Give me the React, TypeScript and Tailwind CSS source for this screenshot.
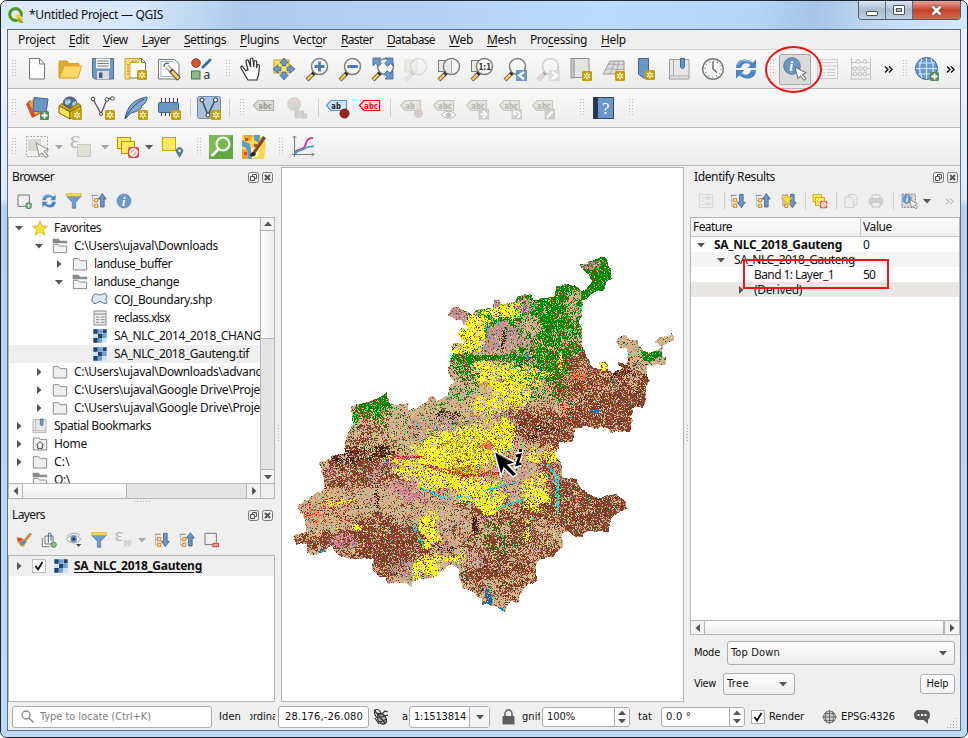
import React, { useLayoutEffect, useRef } from "react";

/* ---------- text ---------- */

type FitProps = { w?: number; className?: string; children: React.ReactNode };

/* Spreads its letters so that the label takes exactly w pixels. */
function Fit({ w, className = "", children }: FitProps) {
  const ref = useRef<HTMLSpanElement>(null);
  useLayoutEffect(() => {
    const el = ref.current;
    if (!el || !w) return;
    el.style.letterSpacing = "0px";
    const n = (el.textContent || "").length;
    const natural = el.getBoundingClientRect().width;
    el.style.letterSpacing = `${(w - natural) / n}px`;
  }, [w]);
  return (
    <span ref={ref} className={`inline-block shrink-0 whitespace-pre ${className}`}>
      {children}
    </span>
  );
}

const UI = "font-['Noto_Sans','Open_Sans',sans-serif] text-[12px] leading-[18px]";
const TAHOMA = "font-['DejaVu_Sans',sans-serif] [font-stretch:semi-condensed] text-[11px] leading-[16px]";

/* ---------- icon parts ---------- */

const BLUE = "#6a97c5";
const DBLUE = "#41668f";

function Star({ x = 15, y = 15 }: { x?: number; y?: number }) {
  return (
    <g transform={`translate(${x} ${y})`}>
      <rect width="10" height="10" rx="1.5" fill="#c4a000" />
      <path d="M5 1.5v7M1.9 3.2l6.2 3.6M8.1 3.2L1.9 6.8" stroke="#fff" strokeWidth="1.3" />
      <circle cx="5" cy="5" r="1" fill="#c4a000" />
    </g>
  );
}

function Plus({ x = 15, y = 15 }: { x?: number; y?: number }) {
  return (
    <g transform={`translate(${x} ${y})`}>
      <rect width="9" height="9" rx="1.5" fill="#5a8c5a" />
      <path d="M4.5 1.5v6M1.5 4.5h6" stroke="#fff" strokeWidth="1.8" />
    </g>
  );
}

function Lens({ gray = false }: { gray?: boolean }) {
  return (
    <g opacity={gray ? 0.35 : 1}>
      <path d="M10 15L2 23" stroke={gray ? "#888" : "#555"} strokeWidth="4" />
      <path d="M7.6 17.4L2.4 22.6" stroke={gray ? "#bbb" : "#fcc94a"} strokeWidth="2.4" />
      <path d="M9.8 15.2L7.6 17.4" stroke="#222" strokeWidth="3.4" />
      <circle cx="14.5" cy="9.5" r="8" fill="#f4f6f4" stroke="#7d7d7d" strokeWidth="1.5" />
      <path d="M9 9a6 6 0 0 1 8-5" stroke="#fff" strokeWidth="1.4" fill="none" />
    </g>
  );
}

function Abc({ color = "#b5b5ab", fill = "#deded4", text = "abc", tc = "#9c9c94" }) {
  return (
    <g>
      <path d="M1.500 9.500L6 4.500H21.500v10H6z" fill={fill} stroke={color} strokeWidth="1.2" />
      <text x="6.300" y="12.600" fontSize="8.500" fontWeight="700" fill={tc} fontFamily="'DejaVu Sans',sans-serif" textLength={text === "abc" ? 13.5 : 9.5} lengthAdjust="spacingAndGlyphs">
        {text}
      </text>
    </g>
  );
}

function Refresh() {
  return (
    <g fill="#4a86c7">
      <path d="M2 11C2 4 8 1 14 3c2 .6 3.500 1.600 4.500 2.800L22 2.500V11h-8.500l3-3C13 5 8 6 7 11z" />
      <path d="M22 13c0 7-6 10-12 8-2-.6-3.500-1.600-4.500-2.800L2 21.500V13h8.500l-3 3c3.500 3 8.500 2 9.500-3z" />
      <path d="M4 8c2-5 8-6 13-2" stroke="#a9cdf0" fill="none" />
    </g>
  );
}

function Arrow({ x, y, s = 1 }: { x: number; y: number; s?: number }) {
  return (
    <path
      transform={`translate(${x} ${y}) scale(${s})`}
      d="M0 0l3 12 2.800-2.600 3.700 4.600 2-1.600-3.600-4.600L11.500 6z"
      fill="#fff"
      stroke="#777"
      strokeWidth="1.1"
    />
  );
}

function Notallowed({ x, y }: { x: number; y: number }) {
  return (
    <g transform={`translate(${x} ${y})`}>
      <rect width="11" height="11" rx="2" fill="#df4a4a" />
      <circle cx="5.500" cy="5.500" r="3.700" fill="#f3b0b0" stroke="#fff" strokeWidth="1.400" />
      <path d="M3 8l5-5" stroke="#fff" strokeWidth="1.500" />
    </g>
  );
}

function Gem({ d }: { d: "up" | "down" }) {
  return (
    <g>
      <path d="M2.500 3v17M2.500 11h3M2.500 19.500h3" stroke="#aaa" fill="none" strokeWidth="1.300" />
      <path d="M1 3.500h9" stroke="#999" strokeWidth="2" />
      <rect x="5.500" y="8.500" width="4.500" height="4.500" fill="#fff" stroke="#f08a24" strokeWidth="1.800" />
      <rect x="5.500" y="17" width="4.500" height="4.500" fill="#fff" stroke="#f08a24" strokeWidth="1.800" />
      {d === "up" ? (
        <path d="M17 1l6 8h-3.300v12h-5.400V9H11z" fill={BLUE} stroke={DBLUE} strokeWidth="1.300" />
      ) : (
        <path d="M17 22l6-8h-3.300V2h-5.400v12H11z" fill={BLUE} stroke={DBLUE} strokeWidth="1.300" />
      )}
    </g>
  );
}

const icons: Record<string, React.ReactNode> = {
  new: <path d="M4.500 1.500h10l5 5.500v15h-15zM14.500 1.500V7h5" fill="#fdfdfd" stroke="#777" />,
  open: (
    <g>
      <path d="M1 21V4h8l2 2.500h10V9l-3 12z" fill="#e3a72f" stroke="#d89c28" />
      <path d="M1.500 21L6 9h17.500L20 21z" fill="#ffd763" stroke="#dfa732" />
    </g>
  ),
  save: (
    <g>
      <path d="M1.500 1.500h21v20.500H3.500l-2-2z" fill="#7296bd" stroke="#4e6f94" />
      <rect x="5" y="1.500" width="14" height="10" fill="#f4f4f4" />
      <path d="M6.500 4h11M6.500 6.500h11M6.500 9h11" stroke="#777" />
      <rect x="6" y="14" width="12" height="8" fill="#ddd" />
      <rect x="8" y="15.500" width="3.500" height="5.500" fill="#3f5f86" />
    </g>
  ),
  layout: (
    <g>
      <path d="M3.500 1.500h14l4 4v15.500h-18z" fill="#fcfcfc" stroke="#777" />
      <path d="M17.500 1.500v4h4" fill="none" stroke="#777" />
      <path d="M1 1.500h14v4H6V22H1z" fill="#fce083" stroke="#c9a227" />
      <path d="M3 8h2M3 11h2M3 14h2M3 17h2M9 3v2M12 3v2" stroke="#a07d10" />
      <Star x={13} y={13} />
    </g>
  ),
  manager: (
    <g>
      <path d="M1.500 2.500h16l4.500 4v15.500H1.500z" fill="#fcfcfc" stroke="#777" />
      <path d="M4 4.500h12M4 19.500h14M4 4.500v15" stroke="#9fb3cc" />
      <path d="M13.500 13l8.500 9" stroke="#555" strokeWidth="5" />
      <path d="M15 14.500l6.500 7" stroke="#f0d05a" strokeWidth="3" />
      <path d="M13.500 13L10 9.500" stroke="#777" strokeWidth="4.500" />
      <path d="M13.500 13L9 8.500" stroke="#e8e8e8" strokeWidth="3" />
      <path d="M7 10c0-3.500 2-4.500 5-3.500" stroke="#666" strokeWidth="1.500" fill="none" />
    </g>
  ),
  style: (
    <g>
      <circle cx="6" cy="6" r="4.300" fill="#d4572f" stroke="#a33f1d" />
      <path d="M13 10l7-7" stroke="#3d6da8" strokeWidth="3" strokeLinecap="round" />
      <rect x="1.500" y="14" width="8.500" height="8" fill="#8dbb8c" stroke="#4b7a4b" />
      <text x="13.500" y="21.500" fontSize="12" fill="#333" fontFamily="'Noto Sans',sans-serif">a</text>
    </g>
  ),
  hand: (
    <path
      d="M6.500 13.500L4 10c-1-1.500-2.800-.5-2 1l4.500 8 2.500 4h9l1.500-5 1-9c0-2-2.500-2-2.500 0l-.5 2 .2-6c0-2-2.700-2-2.700 0l-.2 5L14 2.500c-.4-2-3-1.500-2.800.5l.5 7-2.200-6c-.8-1.800-3-1-2.500 1l2 8z"
      fill="#fff"
      stroke="#333"
      strokeWidth="1.200"
    />
  ),
  pan: (
    <g>
      <rect x="2" y="3" width="15" height="13" fill="#ffe65c" stroke="#b89c1c" />
      <g fill={BLUE} stroke={DBLUE} strokeWidth=".800">
        <path d="M12 1l4.300 5h-2.500V9h-3.600V6H7.700zM12 23l4.300-5h-2.500V15h-3.600v3H7.700z" />
        <path d="M1 12l5-4.300v2.500H9v3.600H6v2.500zM23 12l-5-4.300v2.500H15v3.600h3v2.500z" />
      </g>
    </g>
  ),
  zin: (
    <g>
      <Lens />
      <path d="M14.500 4.500v10M9.500 9.500h10" stroke="#4f7cad" strokeWidth="2.800" />
    </g>
  ),
  zout: (
    <g>
      <Lens />
      <path d="M9.300 9.500h10.500" stroke="#4f7cad" strokeWidth="2.800" />
    </g>
  ),
  zfull: (
    <g>
      <Lens />
      <g fill={BLUE} stroke={DBLUE} strokeWidth=".800">
        <path d="M2 1h8L7.600 3.200l3 3-3 3-3-3L2 9z" />
        <path d="M22 1v8l-2.300-2.600-3 3-3-3 3-3L14 1z" />
        <path d="M22 22h-8l2.300-2.300-3-3 3-3 3 3L22 14z" />
      </g>
    </g>
  ),
  zsel: (
    <g opacity=".550">
      <rect x="1" y="3" width="12" height="12" fill="#e4e3d6" stroke="#c8c8c0" />
      <Lens gray />
    </g>
  ),
  zlayer: (
    <g>
      <rect x="1.500" y="3.500" width="12" height="11" fill="#e9e9e4" stroke="#777" />
      <Lens />
      <path d="M14.500 3v13H9V6z" fill="#dcddd8" opacity=".600" />
      <path d="M14.500 3v13" stroke="#aaa" />
    </g>
  ),
  znative: (
    <g>
      <rect x="1.500" y="3.500" width="12" height="11" fill="#e9e9e4" stroke="#777" />
      <Lens />
      <text x="8.500" y="13" fontSize="9.500" fontWeight="700" fill="#333" fontFamily="'DejaVu Sans',sans-serif" textLength="12.500" lengthAdjust="spacingAndGlyphs">1:1</text>
    </g>
  ),
  zlast: (
    <g>
      <Lens />
      <rect x="13" y="13" width="11" height="11" fill={BLUE} />
      <path d="M21 15l-5 3.500 5 3.500" stroke="#fff" strokeWidth="2.200" fill="none" />
    </g>
  ),
  znext: (
    <g>
      <Lens gray />
      <rect x="13" y="13" width="11" height="11" fill="#dcdcdc" />
      <path d="M16 15l5 3.500-5 3.500" stroke="#fff" strokeWidth="2.200" fill="none" />
    </g>
  ),
  newmap: (
    <g>
      <path d="M2 1.500h18v19H4.500V4z" fill="#e4e4e4" stroke="#8f8f8f" />
      <path d="M2 1.500h3v19.500H2z" fill="#ccc" stroke="#8f8f8f" />
      <Star x={13} y={14} />
    </g>
  ),
  new3d: (
    <g>
      <path d="M8 4h14v11L14 17H1z" fill="#ddd" stroke="#999" />
      <path d="M6 8c5-3 9 2 16-1M3 13c5-3 10 1 19-1M13 4L8 17M17 4l-3 13" stroke="#aaa" fill="none" />
      <Star x={13} y={14} />
    </g>
  ),
  newbook: (
    <g>
      <path d="M3.500 1.500h10V17L9 21.500 3.500 17z" fill={BLUE} stroke={DBLUE} />
      <Star x={10} y={13} />
    </g>
  ),
  books: (
    <g>
      <path d="M1.500 2.500h19.500v19.500H1.500z" fill="#e8e8e8" stroke="#999" />
      <path d="M5.500 2v17M1.500 19h19.500" stroke="#aaa" />
      <path d="M12.500 1.500h4V10l-2 2-2-2z" fill={BLUE} stroke={DBLUE} />
    </g>
  ),
  clock: (
    <g>
      <circle cx="12" cy="12" r="10.300" fill="#f6f6f4" stroke="#777" strokeWidth="1.400" />
      <circle cx="12" cy="12" r="8" fill="none" stroke="#5c86b5" strokeWidth="1.500" strokeDasharray=".8 3.400" />
      <path d="M12 4.500V12l4 3.500" stroke="#555" strokeWidth="1.300" fill="none" />
    </g>
  ),
  refresh: <Refresh />,
  identify: (
    <g>
      <circle cx="9" cy="9" r="8.300" fill={BLUE} stroke="#5580ad" />
      <text x="6.200" y="14" fontSize="14" fontStyle="italic" fontWeight="700" fill="#fff" fontFamily="'Liberation Serif',serif">i</text>
      <Arrow x={12} y={10} s={0.95} />
    </g>
  ),
  table: (
    <g opacity=".350">
      <rect x="1.500" y="2.500" width="20" height="19" fill="#f4f4f4" stroke="#888" />
      <path d="M2 5.500h19M2 9h19M5 12.500h4M5 15.500h4M5 18.500h4M11 12.500h8M11 15.500h8M11 18.500h8" stroke="#888" />
    </g>
  ),
  abacus: (
    <g opacity=".380" stroke="#777" fill="none">
      <path d="M2.500 1v20M21.500 1v20M2 5.500h20M2 11.500h20M2 17.500h20M1 22h22" />
      {[9, 16].map((x) => <circle key={x} cx={x} cy="4.500" r="2" fill="#ddd" />)}
      {[6, 11, 16].map((x) => <circle key={x} cx={x} cy="11.500" r="2" fill="#ddd" />)}
      {[6, 11, 16].map((x) => <circle key={x} cx={x} cy="17" r="2" fill="#ddd" />)}
    </g>
  ),
  globe: (
    <g>
      <circle cx="11.500" cy="11.500" r="11" fill="#6598cf" stroke="#41668f" />
      <path d="M11.500 1v21M1 11.500h21M3 6h17M3 17h17M7 2c-3 6-3 13 0 19M16 2c3 6 3 13 0 19" stroke="#d6e6f5" fill="none" strokeWidth="1.200" />
      <Plus x={15} y={15} />
    </g>
  ),
  dsm: (
    <g>
      <path d="M1 8l4-4 10 14-8 4z" fill="#c9532c" />
      <path d="M4 7l4-4 10 12-8 4z" fill="#f0a830" />
      <path d="M9 1.500l14 1.500-2 14-13-2z" fill={BLUE} stroke={DBLUE} />
      <Plus x={15} y={15} />
    </g>
  ),
  gpkg: (
    <g>
      <path d="M1 10l11 5v8L1 17z" fill="#ffe14e" stroke="#7a6510" />
      <path d="M12 15l11-5v7l-11 6z" fill="#e8bf14" stroke="#7a6510" />
      <circle cx="12" cy="8" r="7" fill="#4f6f92" stroke="#36506e" />
      <path d="M7 4l5-1 1 3-3 3-3-1zM14 7l4-2 1 4-4 3z" fill="#a9c6e0" />
      <path d="M1 10l2.500-2.500L12 13l8.500-6L23 10l-11 5.500z" fill="#c9a516" stroke="#7a6510" strokeWidth=".800" />
      <Star x={14} y={14} />
    </g>
  ),
  shp: (
    <g>
      <path d="M2 3l8 15 6-15 6-1" stroke="#555" fill="none" strokeWidth="1.300" />
      {[[2, 3], [16, 3.500], [21.500, 2.500]].map(([x, y]) => <circle key={x} cx={x} cy={y} r="1.800" fill="#fff" stroke="#444" />)}
      <circle cx="10" cy="18" r="1.500" fill="#fff" stroke="#444" />
      <Star x={14} y={14} />
    </g>
  ),
  feather: (
    <g>
      <path d="M1 23C3 10 10 3 23 1c0 5-3 8-6 9l1 1c-3 4-7 5-11 6z" fill="#84a9d2" stroke="#3e5f86" />
      <path d="M1 23C5 14 12 7 20 3" stroke="#2d4b70" fill="none" />
      <Star x={14} y={14} />
    </g>
  ),
  chip: (
    <g>
      <path d="M4.500 2v18M8.500 2v18M12.500 2v18M16.500 2v18M20.500 2v18" stroke="#444" />
      <rect x="1.500" y="6.500" width="20" height="10" rx="1" fill={BLUE} stroke={DBLUE} />
      <Star x={14} y={14} />
    </g>
  ),
  virt: (
    <g>
      <rect x=".500" y=".500" width="23" height="22" rx="2" fill="#a9c1db" stroke="#6f8cab" />
      <path d="M5 4l6 15 7-15" stroke="#3f4f60" fill="none" strokeWidth="1.500" />
      {[[5, 4], [18.500, 4], [11, 19]].map(([x, y]) => <circle key={x} cx={x} cy={y} r="2" fill="#fff" stroke="#333" />)}
      <Star x={14} y={14} />
    </g>
  ),
  abc: <Abc />,
  pie: (
    <g opacity=".600">
      <circle cx="9" cy="8" r="7" fill="#c3c3bd" />
      <path d="M9 8V1a7 7 0 0 1 6 10z" fill="#dcb9b9" />
      <path d="M10 22V12h4v10zM15 22v-7h4v7zM19 22v-4h3v4z" fill="#b9bbb5" stroke="#aaa" strokeWidth=".500" />
    </g>
  ),
  abpin: (
    <g>
      <Abc color="#4f9be8" fill="#cfe6fb" text="ab" tc="#222" />
      <path d="M18.500 9v7" stroke="#eee" strokeWidth="3" />
      <circle cx="19.500" cy="17.500" r="4.500" fill="#a32020" stroke="#7b1313" />
    </g>
  ),
  abred: <Abc color="#f00" fill="#ffe2e2" tc="#f00" />,
  abg1: (
    <g opacity=".700">
      <Abc text="ab" />
      <circle cx="19.500" cy="17.500" r="4.500" fill="#cdb9bb" />
    </g>
  ),
  abg2: (
    <g opacity=".700">
      <Abc />
      <path d="M9 19c4-5 11-5 15 0-4 4-11 4-15 0z" fill="#fff" stroke="#999" />
      <circle cx="16.500" cy="19" r="2.500" fill="#aaa" />
    </g>
  ),
  abg3: (
    <g opacity=".700">
      <Abc />
      <rect x="13.500" y="13" width="10.500" height="10.500" fill="#bdbdb8" />
      <path d="M15 18.500h5m-2-3.500l3.500 3.500-3.500 3.500" stroke="#fff" strokeWidth="2" fill="none" />
    </g>
  ),
  abg4: (
    <g opacity=".700">
      <Abc />
      <rect x="13.500" y="13" width="10.500" height="10.500" fill="#bdbdb8" />
      <path d="M16 17.500a3 3 0 1 1 3 4M16 14.500v4h3.500" stroke="#fff" strokeWidth="1.500" fill="none" />
    </g>
  ),
  abg5: (
    <g opacity=".700">
      <Abc />
      <rect x="13.500" y="13" width="10.500" height="10.500" fill="#bdbdb8" />
      <path d="M16 21.500l5.500-6" stroke="#fff" strokeWidth="2.200" />
    </g>
  ),
  help: (
    <g>
      <rect x="1.500" y="1.500" width="20" height="21" fill={BLUE} stroke="#2c4a6c" />
      <rect x="1.500" y="1.500" width="4.500" height="21" fill="#28384a" />
      <text x="10" y="17.500" fontSize="17" fill="#fff" fontFamily="'Liberation Serif',serif">?</text>
    </g>
  ),
  select: (
    <g opacity=".700">
      <rect x="1.500" y="1.500" width="21" height="20" fill="none" stroke="#888" strokeDasharray="2 1.500" />
      <rect x="3" y="4" width="13" height="12" fill="#cfcfc4" />
      <Arrow x={11} y={8} s={1.050} />
    </g>
  ),
  eps: (
    <g opacity=".800">
      <text x="-.500" y="12.500" fontSize="26" fill="#b0b0b0" fontFamily="'Liberation Serif',serif">ε</text>
      <rect x="7.500" y="9.500" width="13" height="12" fill="#dcdcd0" stroke="#c0c0b8" />
    </g>
  ),
  desel: (
    <g>
      <rect x="1.500" y="2.500" width="13" height="11" fill="#ffe95f" stroke="#b59100" />
      <rect x="5.500" y="6.500" width="13" height="12" fill="#ffe95f" stroke="#b59100" />
      <Notallowed x={12} y={12} />
    </g>
  ),
  selloc: (
    <g>
      <rect x="1.500" y="2.500" width="13" height="13" fill="#ffe95f" stroke="#c9a400" />
      <path d="M18.500 23l-3.500-6a3.700 3.700 0 1 1 7 0z" fill="#57809f" />
      <circle cx="18.500" cy="15.700" r="1.300" fill="#fff" />
    </g>
  ),
  qms: (
    <g>
      <rect width="24" height="24" fill="#62a744" />
      <path d="M0 0h24L0 20z" fill="#7dbb52" />
      <path d="M9 14.500L2.500 21" stroke="#fff" strokeWidth="2.800" />
      <circle cx="14" cy="9" r="6.500" fill="#76b74f" stroke="#fff" strokeWidth="2.200" />
    </g>
  ),
  osm: (
    <g>
      <path d="M0 0h18l6 8-2 16H0z" fill="#f8d94c" />
      <path d="M0 5l8 4 3 15H5L4 13l-4-2zM12 0h6l-1 8-5-3z" fill="#5c9bd1" />
      <path d="M2 0h9l-3 6-6-2zM0 14l6 2v8H0z" fill="#e8a52e" />
      <path d="M9 13l9-1-2 9-6 3z" fill="#fff5c8" />
      <path d="M3 3h3v3H3zM12 9h3v3h-3zM2 17h3v3H2z" fill="#d04a30" />
      <path d="M10 18l11-17 3 2-11 16z" fill="#8a4a1c" />
      <path d="M8 21c0-3 2-4 4-4l2 2c-1 2-3 3-6 2z" fill="#222" />
    </g>
  ),
  plot: (
    <g fill="none">
      <path d="M3.500 1v21M1 19.500h22M1.500 3l2-2 2 2M21 17.500l2 2-2 2" stroke="#777" />
      <path d="M4 17c5-5 9 0 11-9 1-4 4-5 7-5" stroke="#c43fae" strokeWidth="2" />
      <path d="M4 19c4-6 7-2 11-6 3-3 5 0 8-2" stroke="#4aa3b8" strokeWidth="1.700" />
    </g>
  ),
  addlayer: (
    <g>
      <path d="M3 3h17v13M3 3v17h12" fill="none" stroke="#777" strokeWidth="1.500" />
      <circle cx="19" cy="19" r="5" fill="#5a9a62" />
      <path d="M19 16v6M16 19h6" stroke="#fff" strokeWidth="1.600" />
    </g>
  ),
  filter: (
    <g>
      <path d="M2 3h20v3l-7.500 8v9h-5v-9L2 6z" fill="#6c9ccc" stroke="#4e749c" />
      <path d="M1 1h22v4H1z" fill="#ffe14e" stroke="#c9a516" />
    </g>
  ),
  up: <Gem d="up" />,
  down: <Gem d="down" />,
  info: (
    <g>
      <circle cx="12" cy="12" r="10.500" fill={BLUE} stroke="#5b84b0" />
      <text x="9" y="19" fontSize="18" fontStyle="italic" fontWeight="700" fill="#fff" fontFamily="'Liberation Serif',serif">i</text>
    </g>
  ),
  star: (
    <g>
      <Gem d="down" />
      <path d="M9 1l2.500 5.500 6 .700-4.500 4 1.300 6L9 14l-5.300 3.200L5 11.200.500 7.200l6-.7z" fill="#ffd93a" stroke="#d99b16" />
    </g>
  ),
  brush: (
    <g>
      <path d="M13 13L22.500 2" stroke="#cf8a33" strokeWidth="4" />
      <path d="M1 12l6-3 9 4-4 9c-5 1-9-4-11-10z" fill="#f0b03c" />
      <path d="M1 8l7 1 3 3-8 3z" fill="#e0483e" />
      <path d="M5 16l8-4 3 3-7 6z" fill="#5687c8" />
    </g>
  ),
  group: (
    <g fill="none" stroke="#777" strokeWidth="1.500">
      <path d="M2 9v13h11M6 6v12h12V6z" fill="#f4f4f4" />
      <path d="M11 16V3c0-2 4-2 4 0v10" stroke={DBLUE} />
      <circle cx="19" cy="19" r="4" fill="#8dbb8c" stroke="#5a8c5a" />
    </g>
  ),
  eye: (
    <g>
      <path d="M1 11c6-8 15-8 21 0-6 7-15 7-21 0z" fill="#fff" stroke="#999" strokeWidth="1.500" />
      <circle cx="11.500" cy="10.500" r="5" fill="#5c86b5" />
      <circle cx="11.500" cy="10.500" r="1.800" fill="#223" />
      <path d="M1 7c5-6 14-7 20-2" stroke="#aaa" fill="none" strokeWidth="1.500" />
      <path d="M15 18h8l-4 4z" fill="#444" />
    </g>
  ),
  epsf: (
    <g opacity=".700">
      <text x="-2" y="14" fontSize="29" fill="#999" fontFamily="'Liberation Serif',serif">ε</text>
      <path d="M12 13h10v8h-3v-5h-3v5h-3z" fill="#ccc" stroke="#bbb" />
    </g>
  ),
  remove: (
    <g>
      <path d="M3 2h17v14M3 2v17h12" fill="none" stroke="#777" strokeWidth="1.500" />
      <rect x="14" y="16" width="10" height="7" rx="2" fill="#e04848" />
      <path d="M16 19.500h6" stroke="#fff" strokeWidth="1.500" />
    </g>
  ),
  form: (
    <g opacity=".220" fill="none" stroke="#777" strokeWidth="1.400">
      <rect x="2" y="2" width="20" height="20" />
      <path d="M5 7h5M5 12h5M5 17h5M12 6h7v3h-7zM12 15h7v3h-7z" />
    </g>
  ),
  copy: (
    <g opacity=".250" fill="#eee" stroke="#777" strokeWidth="1.500">
      <path d="M8 2h9l4 4v12H8z" />
      <path d="M3 6h9l4 4v12H3z" />
    </g>
  ),
  print: (
    <g opacity=".350" stroke="#777" strokeWidth="1.500">
      <path d="M6 8V3h12v5" fill="#fff" />
      <rect x="2" y="8" width="20" height="9" rx="2" fill="#999" />
      <path d="M6 14h12v7H6z" fill="#eee" />
    </g>
  ),
  idmode: (
    <g>
      <rect x="1.500" y="1.500" width="20" height="20" fill="#cfd6dd" stroke="#777" strokeDasharray="2.500 2" strokeWidth="1.500" />
      <circle cx="9" cy="9" r="7" fill={BLUE} />
      <text x="7" y="14" fontSize="13" fontStyle="italic" fontWeight="700" fill="#fff" fontFamily="'Liberation Serif',serif">i</text>
      <Arrow x={13} y={10} />
    </g>
  ),
  favorite: <path d="M12 1.500l3 7.500 8 .5-6.200 5 2.200 8-7-4.500L5 22.500l2.200-8L1 9.500 9 9z" fill="#ffe63b" stroke="#d1a614" strokeWidth="1.200" />,
  folder: <path d="M2 4h8l2.500 3H22v14H2z" fill="#efefef" stroke="#8c8c8c" strokeWidth="1.500" />,
  folderopen: (
    <g>
      <path d="M1 1h9l2 3h11v4H1z" fill="#8a8a8a" />
      <path d="M2 9.500h7l2 2.500h11V22H2z" fill="#f2f2f2" stroke="#8c8c8c" strokeWidth="1.500" />
    </g>
  ),
  home: (
    <g>
      <path d="M2 3h8l2.500 2H22v16H2z" fill="#efefef" stroke="#8c8c8c" strokeWidth="1.500" />
      <path d="M7 13.500l5-5 5 5h-1.500v5h-7v-5z" fill="#fff" stroke="#333" strokeWidth="1.400" />
    </g>
  ),
  poly: <path d="M2 5c4-5 8 1 12-1s7-3 8 1-3 5 0 9-4 4-8 1-7 4-11 2S-1 10 2 5z" fill="#dbe6f3" stroke="#4e6783" strokeWidth="1.500" />,
  sheet: (
    <g stroke="#8a8a8a" strokeWidth="1.500">
      <rect x="3" y="1.500" width="18" height="21" fill="#eee" />
      <path d="M3 6h18M6 10.500h5M13 10.500h6M6 14.500h5M13 14.500h6M6 18.500h5M13 18.500h6" />
    </g>
  ),
  raster: (
    <g>
      <rect x="2" y="2" width="20" height="20" fill="#cfe2f5" />
      <path d="M8.500 2H15v6.500H8.500zM15 8.500h7V15h-7zM8.500 15H15v7H8.500z" fill="#6ea0d4" />
      <path d="M2 2h6.500v6.500H2zM9 9h6v6H9zM16 2h6v6h-6zM2 15h6.500v7H2z" fill="#20446f" />
    </g>
  ),
};

function Icon({ name, size = 24 }: { name: string; size?: number }) {
  return (
    <svg className="shrink-0 overflow-visible" width={size} height={size} viewBox="0 0 24 24">
      {icons[name]}
    </svg>
  );
}

/* ---------- toolbar parts ---------- */

function Slot({ name }: { name: string }) {
  return (
    <div className="flex w-[33px] shrink-0 items-center justify-center">
      <Icon name={name} />
    </div>
  );
}

function Handle({ className = "" }: { className?: string }) {
  return (
    <div className={`flex shrink-0 items-center justify-center ${className}`}>
      <svg width="5" height="18" viewBox="0 0 5 18" shapeRendering="crispEdges">
        {[0, 3, 6, 9, 12, 15].map((y) => (
          <g key={y} fill="#bdbdbd">
            <rect x="0" y={y} width="1" height="1" />
            <rect x="3" y={y} width="1" height="1" />
          </g>
        ))}
      </svg>
    </div>
  );
}

function Sep({ className = "" }: { className?: string }) {
  return (
    <div className={`flex shrink-0 items-center justify-center ${className}`}>
      <div className="h-[18px] w-px bg-[#cfcfcf]" />
    </div>
  );
}

function Tri({ dir = "down", light = false }: { dir?: "down" | "up" | "left" | "right"; light?: boolean }) {
  const d = {
    down: "M0 2h8L4 6.500z",
    up: "M0 6h8L4 1.500z",
    left: "M6 0v8L1.500 4z",
    right: "M2 0v8L6.500 4z",
  }[dir];
  return (
    <svg width="8" height="8" viewBox="0 0 8 8" className="shrink-0">
      <path d={d} fill={light ? "#a8a8a8" : "#555"} />
    </svg>
  );
}

function More({ light = false }: { light?: boolean }) {
  return (
    <svg width="9" height="7" viewBox="0 0 9 7" fill="none" stroke={light ? "#999" : "#111"} strokeWidth={light ? 1 : 1.4}>
      <path d="M1 .500l3 3-3 3M5 .500l3 3-3 3" />
    </svg>
  );
}

function PanelTitle({ title, w, className = "" }: { title: string; w: number; className?: string }) {
  return (
    <div className={`flex shrink-0 items-center justify-between ${className}`}>
      <Fit w={w}>{title}</Fit>
      <div className="flex gap-[3px]">
        {["M4.500 4.500v-2h4v4h-2M2.500 4.500h4v4h-4z", "M3 3l5 5M8 3L3 8"].map((d, i) => (
          <svg key={d} width="11" height="11" viewBox="0 0 11 11" fill="none">
            <rect x=".500" y=".500" width="10" height="10" rx="2" stroke="#777" />
            <path d={d} stroke="#555" strokeWidth={i ? 2 : 1} />
          </svg>
        ))}
      </div>
    </div>
  );
}

/* ---------- title and menus ---------- */

const menus: [string, string, string, number][] = [
  ["Pro", "j", "ect", 37], ["", "E", "dit", 20], ["", "V", "iew", 25], ["", "L", "ayer", 28],
  ["", "S", "ettings", 42], ["", "P", "lugins", 39], ["Vect", "o", "r", 34], ["", "R", "aster", 32],
  ["", "D", "atabase", 48], ["", "W", "eb", 24], ["", "M", "esh", 29], ["Pro", "c", "essing", 57], ["", "H", "elp", 25],
];

function TitleBar() {
  return (
    <div className="flex h-[28px] shrink-0 justify-between bg-[linear-gradient(100deg,#dcebfa_0%,#d6e8fb_14%,#aecbec_25%,#b4d3f4_45%,#bbdcfd_62%,#b4d5f5_78%,#a5c5e8_84%,#c6def5_92%,#d4e7fa_100%)] pl-[7px]">
      <div className="flex items-center gap-[5px]">
        <svg width="16" height="16" viewBox="0 0 16 16">
          <circle cx="7.500" cy="7.500" r="5.800" fill="none" stroke="#589632" strokeWidth="3.200" />
          <path d="M7 7h3.500l5 5.500V15h-3.500L7 10z" fill="#f0c93a" stroke="#fff" strokeWidth=".600" />
          <path d="M11 11l5 5h-4l-3-3z" fill="#93b023" />
        </svg>
        <Fit w={134}>*Untitled Project — QGIS</Fit>
      </div>
      <div className="mr-[6px] flex h-[19px] overflow-hidden rounded-b-[4px] border border-t-0 border-[#4d5d70]">
        <div className="flex w-[27px] items-center justify-center border-r border-[#5b6b7d] bg-linear-to-b from-[#dbe6f1] via-[#a9bccf] to-[#c0d2e4]">
          <div className="mt-[6px] h-[5px] w-[12px] rounded-[1px] border border-[#555] bg-white" />
        </div>
        <div className="flex w-[27px] items-center justify-center border-r border-[#5b6b7d] bg-linear-to-b from-[#dbe6f1] via-[#a9bccf] to-[#c0d2e4]">
          <div className="h-[10px] w-[12px] rounded-[1px] border border-[#555] bg-white p-[2px]">
            <div className="h-full border border-[#555] bg-[#a9bccf]" />
          </div>
        </div>
        <div className="flex w-[47px] items-center justify-center bg-linear-to-b from-[#e3a297] via-[#c5402c] to-[#d5664c]">
          <svg width="13" height="11" viewBox="0 0 13 11">
            <path d="M2.500 1.500l8 8M10.500 1.500l-8 8" stroke="#444" strokeWidth="4" />
            <path d="M2.500 1.500l8 8M10.500 1.500l-8 8" stroke="#fff" strokeWidth="2.600" />
          </svg>
        </div>
      </div>
    </div>
  );
}

const BAR = "flex shrink-0 border-b border-[#b9b9b9] bg-linear-to-b from-[#fafafa] to-[#ececec]";

function Toolbars() {
  return (
    <>
      <div className="flex h-[20px] shrink-0 items-center gap-[14px] border-b border-[#d5d5d5] bg-[#efefef] pl-[10px]">
        {menus.map(([a, u, b, w]) => (
          <Fit key={a + u + b} w={w}>
            {a}
            <span className="underline underline-offset-2">{u}</span>
            {b}
          </Fit>
        ))}
      </div>
      <div className={`${BAR} h-[39px]`}>
        <Handle className="w-[12.5px]" />
        {["new", "open", "save", "layout", "manager", "style"].map((n) => <Slot key={n} name={n} />)}
        <Handle className="w-[16px] pl-[4px]" />
        {["hand", "pan", "zin", "zout", "zfull", "zsel", "zlayer", "znative", "zlast", "znext", "newmap", "new3d", "newbook", "books", "clock", "refresh"].map((n) => <Slot key={n} name={n} />)}
        <Handle className="w-[16px] pl-[4px]" />
        <div className="relative flex w-[33px] shrink-0 items-center justify-center">
          <div className="flex h-[31px] w-[32px] shrink-0 items-center justify-center rounded-[2px] border border-[#a9a9a9] bg-[#dadada]">
            <Icon name="identify" />
          </div>
          <div className="absolute -left-[14px] -top-[4px] z-10 h-[47px] w-[57px] rounded-[50%] border-2 border-[#e81515]" />
        </div>
        <Slot name="table" />
        <Slot name="abacus" />
        <div className="flex w-[22px] shrink-0 items-center justify-center"><More /></div>
        <Handle className="w-[11px]" />
        <Slot name="globe" />
        <div className="flex w-[14px] shrink-0 items-center justify-center"><More /></div>
      </div>
      <div className={`${BAR} h-[39px]`}>
        <Handle className="w-[12.5px]" />
        {["dsm", "gpkg", "shp", "feather", "chip"].map((n) => <Slot key={n} name={n} />)}
        <Sep className="w-[7px] pl-[2px]" />
        <Slot name="virt" />
        <Sep className="w-[7px]" />
        <Handle className="w-[15px] pl-[5px]" />
        <Slot name="abc" />
        <Slot name="pie" />
        <Sep className="w-[7px] pl-[3px]" />
        <Slot name="abpin" />
        <Slot name="abred" />
        <Sep className="w-[8px]" />
        {["abg1", "abg2", "abg3", "abg4", "abg5"].map((n) => <Slot key={n} name={n} />)}
        <Handle className="w-[28px] pl-[17px]" />
        <Slot name="help" />
        <Handle className="w-[21px]" />
      </div>
      <div className={`${BAR} h-[38px]`}>
        <Handle className="w-[12.5px]" />
        <Slot name="select" />
        <div className="flex w-[11px] shrink-0 items-center pl-[1px]"><Tri light /></div>
        <div className="w-px shrink-0" />
        <Slot name="eps" />
        <div className="flex w-[13px] shrink-0 items-center pl-[2px]"><Tri light /></div>
        <Slot name="desel" />
        <div className="flex w-[12px] shrink-0 items-center"><Tri /></div>
        <Slot name="selloc" />
        <Handle className="w-[15px] pl-[5px]" />
        <Slot name="qms" />
        <Slot name="osm" />
        <Handle className="w-[16px] pl-[5px]" />
        <Slot name="plot" />
      </div>
    </>
  );
}

/* ---------- left column ---------- */

type Row = { depth: number; open?: "open" | "closed"; icon: string; text: string; w: number; sel?: boolean };

const tree: Row[] = [
  { depth: 0, open: "open", icon: "favorite", text: "Favorites", w: 47 },
  { depth: 1, open: "open", icon: "folderopen", text: "C:\\Users\\ujaval\\Downloads", w: 144 },
  { depth: 2, open: "closed", icon: "folder", text: "landuse_buffer", w: 78 },
  { depth: 2, open: "open", icon: "folderopen", text: "landuse_change", w: 85 },
  { depth: 3, icon: "poly", text: "COJ_Boundary.shp", w: 98 },
  { depth: 3, icon: "sheet", text: "reclass.xlsx", w: 56 },
  { depth: 3, icon: "raster", text: "SA_NLC_2014_2018_CHANG", w: 147 },
  { depth: 3, icon: "raster", text: "SA_NLC_2018_Gauteng.tif", w: 135, sel: true },
  { depth: 1, open: "closed", icon: "folder", text: "C:\\Users\\ujaval\\Downloads\\advanc", w: 187 },
  { depth: 1, open: "closed", icon: "folder", text: "C:\\Users\\ujaval\\Google Drive\\Proje", w: 186 },
  { depth: 1, open: "closed", icon: "folder", text: "C:\\Users\\ujaval\\Google Drive\\Proje", w: 186 },
  { depth: 0, open: "closed", icon: "books", text: "Spatial Bookmarks", w: 97 },
  { depth: 0, open: "closed", icon: "home", text: "Home", w: 33 },
  { depth: 0, open: "closed", icon: "folder", text: "C:\\", w: 16 },
  { depth: 0, icon: "folderopen", text: "O:\\", w: 16 },
];

const indent = ["pl-[5px]", "pl-[25px]", "pl-[45px]", "pl-[65px]"];

const SB = "flex shrink-0 items-center justify-center bg-[#f3f3f3]";

function IconCell({ name, w = "w-[25px]" }: { name: string; w?: string }) {
  return (
    <div className={`flex shrink-0 items-center justify-center ${w}`}>
      <Icon name={name} size={16} />
    </div>
  );
}

function LeftColumn() {
  return (
    <div className="flex w-[267px] shrink-0 flex-col">
      <PanelTitle title="Browser" w={42} className="h-[22px] pl-[4px] pr-[2px]" />
      <div className="flex h-[29px] shrink-0 items-center pb-[3px] pl-[3px]">
        {["addlayer", "refresh", "filter", "up", "info"].map((n) => <IconCell key={n} name={n} />)}
      </div>
      <div className="flex h-[282px] shrink-0 flex-col border border-[#b5b5b5] bg-white">
        <div className="flex min-h-0 flex-1">
          <div className="min-w-0 flex-1 overflow-hidden pt-[1px]">
            {tree.map((r, i) => (
              <div key={i} className={`flex h-[18px] items-center ${indent[r.depth]} ${r.sel ? "bg-[#efefef]" : ""}`}>
                <div className="flex w-[18px] shrink-0 items-center pb-[1px] pl-[1px]">
                  {r.open && <Tri dir={r.open === "open" ? "down" : "right"} />}
                </div>
                <Icon name={r.icon} size={16} />
                <Fit w={r.w} className="ml-[6px]">{r.text}</Fit>
              </div>
            ))}
          </div>
          <div className="flex w-[14px] shrink-0 flex-col border-l border-[#b5b5b5] bg-[#e4e4e4]">
            <div className={`${SB} h-[13px] border-b border-[#b5b5b5]`}><Tri dir="up" /></div>
            <div className="h-[108px] shrink-0 border-b border-[#b5b5b5] bg-linear-to-r from-[#fdfdfd] to-[#eee]" />
            <div className="flex-1" />
            <div className={`${SB} h-[14px] border-t border-[#b5b5b5]`}><Tri /></div>
          </div>
        </div>
        <div className="flex h-[15px] shrink-0 border-t border-[#b5b5b5] bg-[#e4e4e4]">
          <div className={`${SB} w-[14px] border-r border-[#b5b5b5]`}><Tri dir="left" /></div>
          <div className="w-[104px] border-r border-[#b5b5b5] bg-linear-to-b from-[#fdfdfd] to-[#eee]" />
          <div className="flex-1" />
          <div className={`${SB} w-[15px] border-x border-[#b5b5b5]`}><Tri dir="right" /></div>
          <div className="w-[13px] bg-[#efefef]" />
        </div>
      </div>
      <div className="flex h-[5px] shrink-0 items-center justify-center">
        <div className="h-px w-[16px] bg-[repeating-linear-gradient(90deg,#aaa_0_1px,transparent_1px_3px)]" />
      </div>
      <PanelTitle title="Layers" w={33} className="h-[22px] pl-[4px] pr-[2px]" />
      <div className="flex h-[29px] shrink-0 items-center pb-[2px] pl-[3px]">
        {["brush", "group", "eye", "filter"].map((n) => <IconCell key={n} name={n} />)}
        <IconCell name="epsf" />
        <div className="flex w-[14px] items-center pl-[2px]"><Tri light /></div>
        {["down", "up", "remove"].map((n) => <IconCell key={n} name={n} w="w-[24.5px]" />)}
      </div>
      <div className="flex h-[147px] shrink-0 flex-col border border-[#b5b5b5] bg-white">
        <div className="flex h-[20px] items-center bg-[#efefef] pl-[6px]">
          <div className="w-[17px]"><Tri dir="right" /></div>
          <div className="flex h-[14px] w-[14px] items-center justify-center border border-[#bdbdbd] bg-white">
            <svg width="10" height="10" viewBox="0 0 10 10"><path d="M1.500 5l2.500 3.500L8.500 1" fill="none" stroke="#111" strokeWidth="1.800" /></svg>
          </div>
          <div className="ml-[7px] flex"><Icon name="raster" size={16} /></div>
          <Fit w={128} className="ml-[5px] font-bold underline underline-offset-2">SA_NLC_2018_Gauteng</Fit>
        </div>
      </div>
    </div>
  );
}

/* ---------- land cover map ---------- */

const outline: number[] = [
  967,48,975,52,978,65,990,90,993,117,975,125,968,150,940,155,905,180,907,215,895,245,905,270,903,300,915,340,935,383,957,385,955,365,978,362,982,390,1000,398,1025,385,1012,372,1015,362,1035,370,1045,345,1040,325,1012,318,1007,300,1032,282,1045,300,1070,300,1085,330,1110,335,1145,320,1120,305,1135,290,1165,290,1172,278,1180,298,1165,308,1148,315,1145,345,1160,350,1155,368,1130,372,1100,375,1100,400,1110,422,1095,440,1098,470,1088,505,1055,500,1052,572,990,575,985,567,910,557,885,568,875,605,835,607,830,630,825,650,845,680,848,710,890,717,903,745,950,772,1000,758,1030,778,1040,805,995,830,982,878,935,872,908,880,905,895,860,875,845,880,845,920,820,945,770,962,765,990,770,1022,735,1038,718,1060,715,1088,690,1085,672,1117,650,1100,640,1095,602,1097,605,1075,570,1050,545,1040,530,985,515,968,460,1010,390,1022,395,1042,375,1028,320,1028,312,1010,290,1005,278,990,278,955,190,950,165,935,150,912,135,935,90,945,78,938,82,912,50,910,35,885,78,878,75,835,52,797,135,740,125,700,115,660,152,658,155,642,188,642,195,620,200,590,212,560,214,495,280,480,320,455,325,485,350,498,380,487,385,510,440,485,450,468,465,470,468,482,505,465,510,430,520,425,505,400,505,360,515,345,510,320,520,308,560,310,530,288,540,265,565,262,540,240,520,232,503,222,515,198,535,200,570,220,595,203,640,205,640,180,655,178,660,190,705,185,710,165,755,160,760,178,825,165,830,138,885,132,905,150,935,125,925,105,900,75,
];

const BROWN = "#84402a", GREEN = "#008b00", YELLOW = "#ffff20", MAUVE = "#bf9494", PINK = "#d6729a";
const DARK = "#3f1d14", CYAN = "#10dcdc", RED = "#e0201c", OCHRE = "#b8960c", LAKE = "#1874b4", TAN = "#d2b48c", CORAL = "#ff6a3c";

/* color, cx, cy, rx, ry, turn in degrees, density, clumpiness */
type Patch = [string, number, number, number, number, number, number, number];

const patches: Patch[] = [
  [BROWN, 980, 440, 150, 90, 20, 0.62, 0.5],
  [BROWN, 990, 520, 110, 60, 0, 0.6, 0.5],
  [BROWN, 860, 400, 70, 70, 0, 0.4, 0.5],
  [BROWN, 800, 560, 130, 55, 10, 0.68, 0.4],
  [BROWN, 930, 810, 130, 85, 10, 0.72, 0.4],
  [BROWN, 830, 680, 40, 70, 0, 0.6, 0.4],
  [BROWN, 230, 690, 120, 50, 0, 0.66, 0.5],
  [BROWN, 270, 610, 90, 40, 10, 0.45, 0.5],
  [BROWN, 330, 900, 110, 75, 10, 0.72, 0.4],
  [BROWN, 230, 925, 120, 40, 5, 0.52, 0.5],
  [BROWN, 330, 970, 60, 40, 0, 0.55, 0.4],
  [BROWN, 110, 905, 80, 24, 0, 0.45, 0.5],
  [BROWN, 720, 970, 120, 100, 0, 0.52, 0.5],
  [BROWN, 590, 1010, 60, 50, 0, 0.5, 0.5],
  [BROWN, 560, 860, 190, 110, 0, 0.3, 0.6],
  [BROWN, 700, 820, 100, 45, 0, 0.5, 0.5],
  [BROWN, 555, 400, 60, 40, 0, 0.3, 0.5],
  [BROWN, 290, 520, 60, 50, -20, 0.3, 0.5],
  [BROWN, 150, 800, 90, 40, -10, 0.2, 0.4],
  [DARK, 260, 640, 80, 16, -8, 0.55, 0.5],
  [DARK, 500, 530, 24, 16, 0, 0.45, 0.5],
  [DARK, 585, 860, 9, 26, 0, 0.8, 0.2],
  [DARK, 500, 925, 22, 10, 0, 0.6, 0.4],
  [DARK, 760, 560, 70, 30, 0, 0.15, 0.5],
  [DARK, 1050, 395, 50, 30, 0, 0.2, 0.5],
  [DARK, 290, 770, 8, 28, 0, 0.5, 0.3],
  [MAUVE, 560, 560, 120, 50, -10, 0.4, 0.5],
  [MAUVE, 450, 570, 70, 35, 0, 0.45, 0.5],
  [MAUVE, 340, 710, 70, 45, 0, 0.42, 0.5],
  [MAUVE, 480, 840, 60, 80, 0, 0.46, 0.5],
  [MAUVE, 740, 700, 110, 70, 0, 0.4, 0.5],
  [MAUVE, 390, 990, 48, 34, 0, 0.75, 0.3],
  [MAUVE, 570, 960, 50, 24, 0, 0.42, 0.4],
  [MAUVE, 720, 350, 55, 55, 0, 0.4, 0.5],
  [PINK, 405, 765, 38, 18, 10, 0.6, 0.4],
  [PINK, 350, 745, 40, 26, 0, 0.3, 0.4],
  [PINK, 140, 680, 24, 18, 0, 0.6, 0.4],
  [PINK, 190, 905, 26, 13, 0, 0.6, 0.4],
  [GREEN, 820, 205, 115, 60, 0, 0.72, 0.4],
  [GREEN, 960, 110, 60, 80, 0, 1.3, 0.1],
  [GREEN, 870, 145, 60, 25, 0, 1.1, 0.2],
  [GREEN, 820, 290, 75, 80, 0, 0.62, 0.5],
  [GREEN, 760, 370, 90, 60, 0, 0.48, 0.5],
  [GREEN, 640, 250, 90, 50, 0, 0.62, 0.4],
  [GREEN, 610, 352, 110, 8, 0, 0.95, 0.2],
  [GREEN, 550, 375, 50, 45, 0, 0.48, 0.4],
  [GREEN, 265, 515, 50, 34, -20, 0.6, 0.4],
  [GREEN, 285, 475, 55, 15, -25, 1, 0.2],
  [GREEN, 790, 440, 60, 40, 0, 0.4, 0.5],
  [GREEN, 1120, 345, 38, 13, 0, 0.9, 0.2],
  [GREEN, 520, 460, 60, 25, -10, 0.26, 0.5],
  [GREEN, 660, 890, 55, 45, 0, 0.22, 0.3],
  [GREEN, 450, 560, 200, 90, 0, 0.1, 0.2],
  [TAN, 740, 250, 34, 26, 0, 0.7, 0.4],
  [TAN, 885, 200, 18, 40, 0, 0.7, 0.3],
  [TAN, 410, 810, 120, 34, 8, 0.55, 0.5],
  [MAUVE, 665, 275, 34, 24, 0, 0.95, 0.2],
  [MAUVE, 625, 315, 28, 22, 0, 0.95, 0.2],
  [MAUVE, 705, 305, 30, 20, 0, 0.7, 0.3],
  [MAUVE, 750, 200, 22, 20, 0, 0.7, 0.3],
  [MAUVE, 520, 213, 26, 20, 20, 1.3, 0.1],
  [PINK, 522, 213, 24, 18, 20, 0.4, 0.1],
  [MAUVE, 550, 232, 20, 12, 20, 1, 0.1],
  [DARK, 668, 300, 6, 34, 10, 0.6, 0.3],
  [PINK, 650, 188, 12, 8, 0, 1, 0.2],
  [PINK, 925, 78, 34, 10, -15, 0.6, 0.3],
  [YELLOW, 575, 285, 34, 48, 20, 0.85, 0.3],
  [YELLOW, 675, 212, 46, 17, -6, 0.75, 0.4],
  [YELLOW, 600, 240, 22, 18, 0, 0.6, 0.3],
  [YELLOW, 528, 328, 18, 12, 0, 0.75, 0.3],
  [YELLOW, 650, 395, 75, 28, 0, 0.64, 0.4],
  [YELLOW, 705, 440, 50, 55, 20, 0.74, 0.4],
  [YELLOW, 620, 495, 45, 30, 0, 0.62, 0.4],
  [YELLOW, 780, 400, 24, 15, 0, 0.5, 0.4],
  [YELLOW, 550, 625, 125, 58, -8, 0.85, 0.35],
  [YELLOW, 650, 590, 45, 42, 0, 0.72, 0.4],
  [YELLOW, 470, 705, 80, 40, 10, 0.75, 0.35],
  [YELLOW, 590, 745, 75, 45, 20, 0.78, 0.35],
  [YELLOW, 620, 795, 32, 20, 0, 0.95, 0.2],
  [YELLOW, 765, 760, 32, 48, 0, 0.64, 0.4],
  [YELLOW, 790, 650, 42, 18, 0, 0.58, 0.4],
  [YELLOW, 443, 870, 22, 52, 0, 0.95, 0.25],
  [YELLOW, 440, 985, 34, 26, 0, 0.85, 0.25],
  [YELLOW, 510, 955, 45, 13, -10, 0.58, 0.4],
  [YELLOW, 360, 680, 40, 26, 0, 0.45, 0.5],
  [YELLOW, 740, 870, 18, 34, 0, 0.4, 0.4],
  [YELLOW, 170, 785, 45, 8, -5, 0.6, 0.3],
  [YELLOW, 230, 860, 14, 9, 0, 0.8, 0.3],
  [YELLOW, 968, 378, 11, 12, 0, 0.85, 0.3],
  [YELLOW, 840, 370, 8, 28, 0, 0.42, 0.4],
  [OCHRE, 570, 640, 90, 60, 0, 0.26, 0.3],
  [OCHRE, 560, 690, 46, 10, 0, 0.6, 0.3],
  [OCHRE, 640, 425, 45, 6, -8, 0.45, 0.3],
  [RED, 490, 690, 58, 6, 14, 0.6, 0.3],
  [RED, 600, 703, 60, 5, -5, 0.55, 0.3],
  [RED, 380, 650, 40, 5, 0, 0.65, 0.3],
  [RED, 150, 810, 80, 35, 0, 0.14, 0.2],
  [RED, 700, 680, 140, 60, 0, 0.1, 0.2],
  [CORAL, 890, 400, 22, 17, 0, 0.6, 0.3],
  [CORAL, 625, 614, 18, 11, 0, 0.65, 0.3],
  [CORAL, 110, 833, 28, 13, 0, 0.4, 0.3],
  [CORAL, 860, 450, 110, 90, 0, 0.09, 0.2],
  [CYAN, 832, 770, 4, 45, 0, 0.9, 0.1],
  [CYAN, 820, 700, 4, 30, -30, 0.7, 0.1],
  [CYAN, 460, 760, 42, 3, 25, 0.85, 0.1],
  [CYAN, 660, 738, 42, 3, -15, 0.85, 0.1],
  [CYAN, 633, 765, 3, 22, 0, 0.8, 0.1],
  [CYAN, 690, 790, 38, 4, -20, 0.7, 0.1],
  [CYAN, 415, 890, 4, 34, -25, 0.6, 0.1],
  [CYAN, 530, 770, 42, 3, 0, 0.6, 0.1],
  [LAKE, 945, 512, 14, 4, 0, 1.2, 0.1],
  [LAKE, 950, 516, 3, 9, 0, 1.2, 0.1],
  [LAKE, 625, 1070, 7, 22, -15, 1.4, 0.1],
  [LAKE, 615, 1090, 14, 6, 0, 1.4, 0.1],
  [LAKE, 660, 1108, 11, 6, 30, 1.2, 0.1],
  [LAKE, 125, 934, 11, 4, 0, 1.3, 0.1],
  [LAKE, 745, 352, 7, 4, 0, 1, 0.1],
];

const speckles: [string, number][] = [
  [CYAN, 0.012], [PINK, 0.02], [RED, 0.006], [CORAL, 0.007], [MAUVE, 0.03], [DARK, 0.008], ["#006400", 0.018],
  [LAKE, 0.002], [YELLOW, 0.01], [BROWN, 0.06], ["#f5deb3", 0.01], ["#20e020", 0.002], [TAN, 0.06],
];

function hash(x: number, y: number, s: number) {
  let h = Math.imul(x | 0, 374761393) ^ Math.imul(y | 0, 668265263) ^ Math.imul(s, 1274126177);
  h = Math.imul(h ^ (h >>> 13), 1274126177);
  h = Math.imul(h ^ (h >>> 16), 2246822519);
  return ((h ^ (h >>> 15)) >>> 0) / 4294967296;
}

function smooth(x: number, y: number, s: number) {
  const xi = Math.floor(x), yi = Math.floor(y);
  const fx = x - xi, fy = y - yi;
  const a = hash(xi, yi, s), b = hash(xi + 1, yi, s), c = hash(xi, yi + 1, s), d = hash(xi + 1, yi + 1, s);
  return a + (b - a) * fx + (c - a) * fy + (a - b - c + d) * fx * fy;
}

function inside(x: number, y: number) {
  let hit = false;
  const n = outline.length;
  for (let i = 0, j = n - 2; i < n; j = i, i += 2) {
    const xi = outline[i], yi = outline[i + 1], xj = outline[j], yj = outline[j + 1];
    if (yi > y !== yj > y && x < ((xj - xi) * (y - yi)) / (yj - yi) + xi) hit = !hit;
  }
  return hit;
}

function coverAt(px: number, py: number) {
  const x = px * 3, y = py * 3;
  const jx = x + (smooth(px / 4, py / 4, 91) - 0.5) * 9;
  const jy = y + (smooth(px / 4, py / 4, 92) - 0.5) * 9;
  if (!inside(jx, jy)) return null;
  /* bends the patch borders so that no ellipse shows */
  const wx = x + (smooth(px / 9, py / 9, 71) - 0.5) * 44 + (smooth(px / 3, py / 3, 73) - 0.5) * 14;
  const wy = y + (smooth(px / 9, py / 9, 72) - 0.5) * 34 + (smooth(px / 3, py / 3, 74) - 0.5) * 10;
  let color = TAN;
  patches.forEach(([c, cx, cy, rx, ry, turn, density, clump], i) => {
    const small = rx < 12 || ry < 12;
    const t = (turn * Math.PI) / 180;
    const dx = (small ? x : wx) - cx, dy = (small ? y : wy) - cy;
    const u = (dx * Math.cos(t) + dy * Math.sin(t)) / rx;
    const v = (-dx * Math.sin(t) + dy * Math.cos(t)) / ry;
    const r = u * u + v * v;
    if (r > 2) return;
    const fall = Math.min(1, (2 - r) * 0.8);
    const patch = smooth(px / 3, py / 2.2, i + 200) * 0.55 + smooth(px / 8, py / 5, i + 400) * 0.45;
    const n = hash(px, py, i + 5) * (1 - clump) + (0.5 + (patch - 0.5) * 1.7) * clump;
    const span = 0.5 + (n - 0.5) * (1 + clump * 0.6);
    if (span < density * fall) color = c;
  });
  let pick = hash(px, py, 3);
  for (const [c, p] of speckles) {
    if (pick < p) return c;
    pick -= p;
  }
  return color;
}

function buildMap() {
  const layers: Record<string, string> = {};
  for (let y = 14; y < 376; y++) {
    let run: string | null = null, start = 0;
    for (let x = 8; x <= 396; x++) {
      const c = x < 396 ? coverAt(x, y) : null;
      if (c !== run) {
        if (run) layers[run] = (layers[run] || "") + `M${start} ${y}h${x - start}v1h${start - x}z`;
        run = c;
        start = x;
      }
    }
  }
  return Object.entries(layers);
}

const landCover = buildMap();

function MapView() {
  return (
    <div className="mt-[1px] flex w-[403px] shrink-0 border border-[#b5b5b5] bg-white">
      <svg width="401" height="533" viewBox="282 168 401 533">
        <g transform="translate(280 240)" shapeRendering="crispEdges">
          {landCover.map(([c, d]) => <path key={c} d={d} fill={c} />)}
        </g>
        <path d="M494 451l22 12-8 2 9 9-4 3-9-9-3 8z" fill="#000" stroke="#fff" strokeWidth="1.400" />
        <path d="M520.500 449.500v2M516 455.500l4-1-2.500 10.500 3.500-1" stroke="#fff" strokeWidth="5.500" fill="none" />
        <path d="M520.500 449v3M516 456l4-1-3 9.500 4-1" stroke="#000" strokeWidth="2.800" fill="none" />
        <path d="M498 454l12 7" stroke="#777" strokeWidth="1.200" />
      </svg>
    </div>
  );
}

/* ---------- identify panel ---------- */

function IdentifyRow({ pad, dir, label, w, value, vw, className = "" }: {
  pad: string; dir?: "down" | "right"; label: string; w: number; value?: string; vw?: number; className?: string;
}) {
  return (
    <div className={`flex h-[15px] items-center ${className}`}>
      <div className={`flex w-[172px] shrink-0 items-center ${pad}`}>
        <div className="flex w-[17px] shrink-0 items-center">{dir && <Tri dir={dir} />}</div>
        <Fit w={w} className={`leading-[15px] ${value === "0" ? "font-bold" : ""}`}>{label}</Fit>
      </div>
      {value && <Fit w={vw} className="leading-[15px]">{value}</Fit>}
    </div>
  );
}

const FIELD = "flex shrink-0 items-center rounded-[3px] border border-[#adadad]";

function RightColumn() {
  return (
    <div className="flex w-[270px] shrink-0 flex-col">
      <PanelTitle title="Identify Results" w={81} className="h-[22px] pl-[4px] pr-[2px]" />
      <div className="flex h-[29px] shrink-0 items-center pb-[3px] pl-[3px]">
        <IconCell name="form" />
        <Sep className="w-[8px] pl-[4px]" />
        <IconCell name="down" w="w-[24px]" />
        <IconCell name="up" w="w-[26px]" />
        <IconCell name="star" w="w-[25px]" />
        <Sep className="w-[8px]" />
        <IconCell name="desel" w="w-[22px]" />
        <Sep className="w-[8px] pl-[3px]" />
        <IconCell name="copy" w="w-[24px]" />
        <IconCell name="print" w="w-[26px]" />
        <Sep className="w-[8px]" />
        <IconCell name="idmode" w="w-[24px]" />
        <div className="flex w-[13px] items-center pl-[2px]"><Tri /></div>
        <div className="flex w-[32px] items-center justify-center pl-[6px]"><More light /></div>
      </div>
      <div className="relative flex h-[418px] shrink-0 flex-col border border-[#b5b5b5] bg-white">
        <div className="flex h-[19px] shrink-0 items-center border-b border-[#c9c9c9] bg-linear-to-b from-[#fdfdfd] to-[#efefef]">
          <div className="flex h-full w-[170px] items-center border-r border-[#c9c9c9] pl-[2px]"><Fit w={39}>Feature</Fit></div>
          <Fit w={29} className="ml-[2px]">Value</Fit>
        </div>
        <IdentifyRow pad="pl-[6px]" dir="down" label="SA_NLC_2018_Gauteng" w={128} value="0" vw={6} />
        <IdentifyRow pad="pl-[26px]" dir="down" label="SA_NLC_2018_Gauteng" w={121} className="bg-[#f5f5f5]" />
        <IdentifyRow pad="pl-[46px]" label="Band 1: Layer_1" w={80} value="50" vw={12} />
        <IdentifyRow pad="pl-[46px]" dir="right" label="(Derived)" w={48} className="bg-[#e8e7e4]" />
        <div className="absolute left-[52px] top-[41px] h-[30px] w-[146px] border-2 border-[#f01414]" />
        <div className="flex-1" />
        <div className="flex h-[14px] shrink-0 border-t border-[#b5b5b5]">
          <div className={`${SB} w-[14px] border-r border-[#b5b5b5]`}><Tri dir="left" /></div>
          <div className="flex-1 bg-linear-to-b from-[#fdfdfd] to-[#eee]" />
          <div className={`${SB} w-[16px] border-l-[2px] border-[#b5b5b5]`}><Tri dir="right" /></div>
        </div>
      </div>
      <div className={`flex h-[35px] shrink-0 items-center pl-[4px] ${TAHOMA}`}>
        <Fit w={26}>Mode</Fit>
        <div className={`${FIELD} ml-[7px] h-[24px] w-[228px] justify-between bg-linear-to-b from-white to-[#ececec] pl-[3px] pr-[7px]`}>
          <Fit w={49}>Top Down</Fit>
          <Tri />
        </div>
      </div>
      <div className={`flex h-[27px] shrink-0 items-center pl-[4px] ${TAHOMA}`}>
        <Fit w={22}>View</Fit>
        <div className={`${FIELD} ml-[7px] h-[22px] w-[72px] justify-between bg-linear-to-b from-white to-[#ececec] pl-[3px] pr-[7px]`}>
          <Fit w={22}>Tree</Fit>
          <Tri />
        </div>
        <div className={`${FIELD} ml-[125px] h-[20px] w-[35px] justify-center bg-linear-to-b from-white to-[#f2f2f2]`}>
          <Fit w={22}>Help</Fit>
        </div>
      </div>
    </div>
  );
}

/* ---------- status bar ---------- */

function Spin() {
  return (
    <div className="flex h-full w-[15px] flex-col items-center justify-center border-l border-[#adadad]">
      <Tri dir="up" />
      <Tri />
    </div>
  );
}

function StatusBar() {
  return (
    <div className={`flex h-[29px] shrink-0 items-center pl-[4px] ${TAHOMA}`}>
      <div className={`${FIELD} h-[22px] w-[200px] bg-white pl-[8px] text-[#808080]`}>
        <svg width="13" height="13" viewBox="0 0 13 13" fill="none" stroke="#8c8c8c" strokeWidth="1.400">
          <circle cx="5" cy="5" r="4" />
          <path d="M8 8l4.500 4.500" />
        </svg>
        <Fit w={111} className="ml-[6px]">Type to locate (Ctrl+K)</Fit>
      </div>
      <Fit w={22} className="ml-[7px]">Iden</Fit>
      <div className="ml-[9px] flex w-[25px] shrink-0 justify-center overflow-hidden"><Fit w={31}>ordina</Fit></div>
      <div className={`${FIELD} ml-[3px] h-[22px] w-[91px] bg-white pl-[6px]`}><Fit w={78}>28.176,-26.080</Fit></div>
      <svg className="ml-[4px] shrink-0" width="16" height="16" viewBox="0 0 16 16" fill="none" stroke="#333" strokeWidth="1.200">
        <ellipse cx="5" cy="5" rx="3" ry="5" transform="rotate(-25 5 5)" />
        <ellipse cx="9" cy="10" rx="4" ry="5.500" transform="rotate(-35 9 10)" fill="#aaa" />
        <path d="M1 1l11 13M2 9l4 6M9 5l3-3 3 1M12 7l3-1M3 4l6 1M5 9l7-2M7 13l7-3" />
      </svg>
      <Fit w={6} className="ml-[13px]">a</Fit>
      <div className={`${FIELD} ml-[1px] h-[22px] w-[81px] bg-white pl-[4px]`}>
        <Fit w={52}>1:1513814</Fit>
        <div className="ml-auto flex h-full w-[20px] items-center justify-center border-l border-[#adadad] bg-[#f3f3f3]"><Tri /></div>
      </div>
      <svg className="ml-[12px] shrink-0" width="13" height="16" viewBox="0 0 13 16">
        <path d="M3 8V4.500a3.500 3.500 0 0 1 7 0V8" fill="none" stroke="#777" strokeWidth="1.800" />
        <rect x=".500" y="7" width="12" height="8.500" rx="1" fill="#5e5e5e" />
      </svg>
      <div className="ml-[7px] w-[18px] shrink-0 overflow-hidden"><Fit w={19}>gnif</Fit></div>
      <div className={`${FIELD} ml-[2px] h-[20px] w-[88px] justify-between bg-white pl-[4px]`}><Fit w={28}>100%</Fit><Spin /></div>
      <Fit w={14} className="ml-[8px]">tat</Fit>
      <div className={`${FIELD} ml-[9px] h-[20px] w-[84px] justify-between bg-white pl-[4px]`}><Fit w={25}>0.0 °</Fit><Spin /></div>
      <div className="ml-[6px] flex h-[14px] w-[14px] shrink-0 items-center justify-center border border-[#adadad] bg-white">
        <svg width="10" height="10" viewBox="0 0 10 10"><path d="M1.500 5l2.500 3.500L8.500 1" fill="none" stroke="#111" strokeWidth="1.800" /></svg>
      </div>
      <Fit w={35} className="ml-[4px]">Render</Fit>
      <svg className="ml-[18px] shrink-0" width="15" height="14" viewBox="0 0 15 14" fill="none" stroke="#666" strokeWidth=".900">
        <circle cx="7.500" cy="7" r="6" fill="#ccc" />
        <path d="M7.500 0v14M0 7h15M2 3.500h11M2 10.500h11M5 1c-2 4-2 8 0 12M10 1c2 4 2 8 0 12" />
      </svg>
      <Fit w={54} className="ml-[4px]">EPSG:4326</Fit>
      <svg className="ml-[19px] shrink-0" width="16" height="15" viewBox="0 0 16 15">
        <path d="M5 1h6c3 0 5 2 5 5 0 2-1 4-2 4.500V15l-4.500-4H5C2 11 0 9 0 6s2-5 5-5z" fill="#5a5a5a" />
        <path d="M3.500 5h2v2h-2zM7 5h2v2H7zM10.500 5h2v2h-2z" fill="#fff" />
      </svg>
      <svg className="ml-auto mr-[1px] mt-[15px] shrink-0" width="12" height="12" viewBox="0 0 12 12" fill="#aaa">
        <path d="M9 0h1v1H9zM6 3h1v1H6zM9 3h1v1H9zM3 6h1v1H3zM6 6h1v1H6zM9 6h1v1H9zM0 9h1v1H0zM3 9h1v1H3zM6 9h1v1H6zM9 9h1v1H9z" />
      </svg>
    </div>
  );
}

/* ---------- window ---------- */

export default function App() {
  return (
    <div className={`h-[738px] w-[968px] overflow-hidden bg-white text-[#111] ${UI}`}>
      <div className="flex h-[738px] flex-col overflow-hidden rounded-[7px] border border-[#1c2430] bg-[#bcdaf6]">
        <TitleBar />
        <div className="flex min-h-0 flex-1 bg-[linear-gradient(180deg,#e9f3fd_0%,#dcebfb_24%,#b5d3f0_25%,#bcdaf8_100%)] px-[6px] pb-[6px]">
          <div className="flex w-[954px] shrink-0 flex-col overflow-hidden border border-[#5b6d80] bg-[#efefef]">
            <Toolbars />
            <div className="flex h-[536px] shrink-0">
              <LeftColumn />
              <div className="flex w-[6px] shrink-0 items-center justify-center">
                <div className="h-[18px] w-px bg-[repeating-linear-gradient(180deg,#aaa_0_1px,transparent_1px_3px)]" />
              </div>
              <MapView />
              <div className="flex w-[6px] shrink-0 items-center justify-center">
                <div className="h-[18px] w-px bg-[repeating-linear-gradient(180deg,#aaa_0_1px,transparent_1px_3px)]" />
              </div>
              <RightColumn />
            </div>
            <StatusBar />
          </div>
        </div>
      </div>
    </div>
  );
}
